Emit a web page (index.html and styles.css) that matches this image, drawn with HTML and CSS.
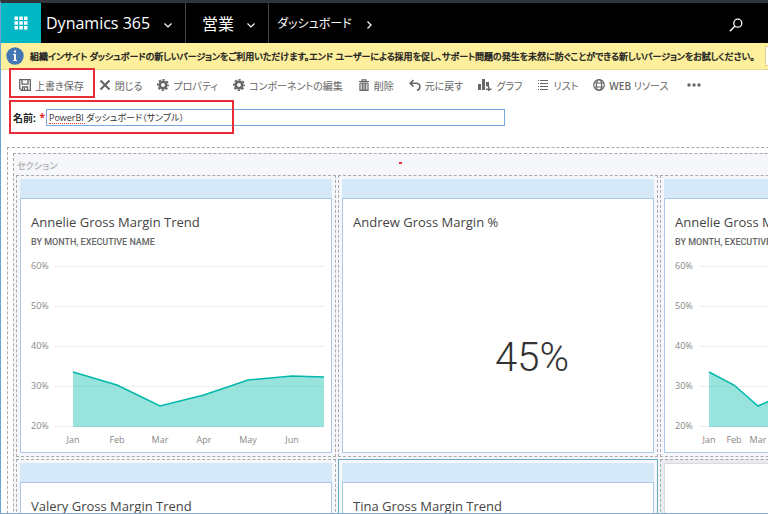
FILE: index.html
```html
<!DOCTYPE html>
<html lang="ja">
<head>
<meta charset="utf-8">
<title>Dynamics 365</title>
<link rel="stylesheet" href="styles.css">
</head>
<body>
<svg class="defs" aria-hidden="true">
  <symbol id="gear" viewBox="0 0 12 12">
    <circle cx="6" cy="6" r="3.300" fill="none" stroke="currentColor" stroke-width="2.600"/>
    <circle cx="6" cy="6" r="5.200" fill="none" stroke="currentColor" stroke-width="1.600" stroke-dasharray="2.3 1.784" stroke-dashoffset="1.15"/>
  </symbol>
  <symbol id="chevron" viewBox="0 0 10 10">
    <path d="M1.500 3.500 5 7l3.500-3.500" fill="none" stroke="currentColor" stroke-width="1.200"/>
  </symbol>
</svg>
<header class="topbar">
  <button class="waffle" aria-label="アプリ">
    <svg width="14" height="14" viewBox="0 0 14 14" fill="#fff"><path d="M.5.5h3.500v3.500H.5zM5.300.5h3.500v3.500H5.300zM10 .5h3.500v3.500H10zM.5 5.300h3.500v3.500H.5zM5.300 5.300h3.500v3.500H5.300zM10 5.300h3.500v3.500H10zM.5 10h3.500v3.500H.5zM5.300 10h3.500v3.500H5.300zM10 10h3.500v3.500H10z"/></svg>
  </button>
  <button class="nav brand">Dynamics 365<svg class="chev"><use href="#chevron"/></svg></button>
  <button class="nav area">営業<svg class="chev"><use href="#chevron"/></svg></button>
  <a class="nav crumb" href="#">ダッシュボード<svg class="chev right"><use href="#chevron"/></svg></a>
  <button class="search" aria-label="検索">
    <svg width="14" height="14" viewBox="0 0 14 14" fill="none" stroke="#fff" stroke-width="1.300"><circle cx="8.800" cy="5.200" r="4"/><path d="M6 8 .8 13.200"/></svg>
  </button>
</header>
<div class="notice">
  <svg class="info" width="18" height="18" viewBox="0 0 18 18"><circle cx="9" cy="9" r="8.700" fill="#4377b4"/><path d="M8 3.500h2v2H8zM7 7h3v6h1v1H7v-1h1V8H7z" fill="#fff"/></svg>
  <p>組織インサイト ダッシュボードの新しいバージョンをご利用いただけます。エンド ユーザーによる採用を促し、サポート問題の発生を未然に防ぐことができる新しいバージョンをお試しください。</p>
  <button aria-label="試す"></button>
</div>
<div class="toolbar">
  <button class="save"><svg viewBox="0 0 12 12" fill="none" stroke="currentColor" stroke-width="1.300"><path d="M.7.7h10.600v10.600H2.500L.7 9.500zM3 .7v4.500h6V.7M3.500 11V8h5v3M5.500 9v2"/></svg>上書き保存</button>
  <button><svg viewBox="0 0 12 12" stroke="currentColor" stroke-width="2.200"><path d="m1.500 1.500 9 9m0-9-9 9"/></svg>閉じる</button>
  <button><svg><use href="#gear"/></svg>プロパティ</button>
  <button><svg><use href="#gear"/></svg>コンポーネントの編集</button>
  <button><svg viewBox="0 0 12 12" fill="none" stroke="currentColor" stroke-width="1.200"><path d="M1 2.500h10M4 2.500V.8h4v1.700M2 4v7.400h8V4M4.300 4v7M6 4v7M7.700 4v7M2 4h8"/></svg>削除</button>
  <button><svg viewBox="0 0 12 12" fill="none" stroke="currentColor" stroke-width="1.600"><path d="M4.500 1 1.200 4.300l3.300 3.300M1.500 4.300H7c5 0 5 6 1 7"/></svg>元に戻す</button>
  <button><svg class="wide" viewBox="0 0 14 12" fill="currentColor"><path d="M0 5h3v6H0zM4 0h3v11H4zM8 3h3v4.500H8zM10 7.500h1.500v2h2V11h-2v1H10v-1H8V9.500h2z"/></svg>グラフ</button>
  <button><svg viewBox="0 0 12 12" fill="none" stroke="currentColor"><path d="M1 1.500h1m1 0h8M1 4.500h1m1 0h8M1 7.500h1m1 0h8M1 10.500h1m1 0h8"/></svg>リスト</button>
  <button><svg viewBox="0 0 12 12" fill="none" stroke="currentColor" stroke-width="1.200"><circle cx="6" cy="6" r="5.300"/><ellipse cx="6" cy="6" rx="2.600" ry="5.300"/><path d="M1.300 4h9.400M1.300 8h9.400"/></svg><span><b>WEB</b> リソース</span></button>
  <button class="overflow" aria-label="その他"><svg class="more" viewBox="0 0 14 12" fill="currentColor"><circle cx="2" cy="6" r="1.700"/><circle cx="7" cy="6" r="1.700"/><circle cx="12" cy="6" r="1.700"/></svg></button>
</div>
<div class="name-row">
  <label for="name">名前:<span>*</span></label>
  <div class="field"><input id="name" type="text" value="PowerBI ダッシュボード（サンプル）"></div>
</div>
<main class="canvas">
  <section class="section">
    <h2>セクション</h2>
    <div class="grid">
      <div class="cell"><div class="strip"></div>
        <article class="card">
          <h3>Annelie Gross Margin Trend</h3>
          <h4>BY MONTH, EXECUTIVE NAME</h4>
          <svg class="chart" width="294" height="188" viewBox="0 0 294 188">
            <path class="rule" d="M24 8.500h269M24 48.500h269M24 88.500h269M24 128.500h269M24 168.500h269"/>
            <path class="fill" d="M42 114 86 127 129 148 173 137 217 122 261 118 293 119V169H42z"/>
            <path class="line" d="M42 114 86 127 129 148 173 137 217 122 261 118 293 119"/>
            <g class="val"><text x="0" y="11">60%</text><text x="0" y="51">50%</text><text x="0" y="91">40%</text><text x="0" y="131">30%</text><text x="0" y="171">20%</text></g>
            <g class="month"><text x="42" y="185">Jan</text><text x="86" y="185">Feb</text><text x="129" y="185">Mar</text><text x="173" y="185">Apr</text><text x="217" y="185">May</text><text x="261" y="185">Jun</text></g>
          </svg>
        </article>
      </div>
      <div class="cell"><div class="strip"></div>
        <article class="card"><h3>Andrew Gross Margin %</h3><p class="kpi">45%</p></article>
      </div>
      <div class="cell"><div class="strip"></div>
        <article class="card">
          <h3>Annelie Gross Margin Trend</h3>
          <h4>BY MONTH, EXECUTIVE NAME</h4>
          <svg class="chart" width="294" height="188" viewBox="0 0 294 188">
            <path class="rule" d="M24 8.500h269M24 48.500h269M24 88.500h269M24 128.500h269M24 168.500h269"/>
            <path class="fill" d="M34 114 59 127 83 148 108 137 132 122 157 118 181 119V169H34z"/>
            <path class="line" d="M34 114 59 127 83 148 108 137 132 122 157 118 181 119"/>
            <g class="val"><text x="0" y="11">60%</text><text x="0" y="51">50%</text><text x="0" y="91">40%</text><text x="0" y="131">30%</text><text x="0" y="171">20%</text></g>
            <g class="month"><text x="34" y="185">Jan</text><text x="59" y="185">Feb</text><text x="83" y="185">Mar</text></g>
          </svg>
        </article>
      </div>
      <div class="cell"><div class="strip"></div><article class="card"><h3>Valery Gross Margin Trend</h3></article></div>
      <div class="cell selected"><div class="strip"></div><article class="card"><h3>Tina Gross Margin Trend</h3></article></div>
      <div class="cell empty"><article class="card"></article></div>
    </div>
  </section>
</main>
<div class="mark mark-save"></div>
<div class="mark mark-name"></div>
<div class="mark-dot"></div>
</body>
</html>
```
FILE: styles.css
```css
* { box-sizing: border-box; }
body {
  margin: 0;
  height: 100vh;
  overflow: hidden;
  position: relative;
  border-top: 3px solid #303539;
  border-left: 1px solid #6ba3d6;
  border-bottom: 1px solid #7fa8cc;
  background: #fff;
  color: #444;
  font-family: "Open Sans", "Noto Sans CJK JP", sans-serif;
  font-feature-settings: "palt";
}
button {
  border: 0;
  padding: 0;
  background: none;
  color: inherit;
  font: inherit;
  font-feature-settings: inherit;
}
h2, h3, h4, p { margin: 0; font-weight: 400; }
.defs { position: absolute; width: 0; height: 0; }

.topbar {
  display: flex;
  height: 40px;
  background: #000;
  color: #fff;
}
.waffle { width: 40px; background: #00b7c3; display: grid; place-items: center; }
.nav {
  display: flex;
  align-items: center;
  color: #fff;
  text-decoration: none;
  white-space: nowrap;
}
.brand { padding: 0 12px 0 5px; gap: 13px; font-size: 16px; border-right: 1px solid #444; }
.area { padding: 0 12px 0 16px; gap: 12px; font-size: 16px; border-right: 1px solid #444; }
.crumb { padding-left: 8px; gap: 12px; font-size: 12px; }
.chev { width: 10px; height: 10px; margin-top: 4px; }
.right { transform: rotate(-90deg); }
.search { margin-left: auto; margin-right: 25px; display: grid; place-items: center; padding-top: 4px; }

.notice {
  display: flex;
  align-items: center;
  height: 27px;
  padding-left: 5px;
  gap: 6px;
  background: #fdef9b;
  border-bottom: 1px solid #e8dc94;
  color: #222;
  font-size: 9px;
  white-space: nowrap;
  overflow: hidden;
}
.notice p { flex: 1 0 0; -webkit-text-stroke: 0.4px #222; }
.info { flex: none; }
.notice button { flex: none; width: 3px; height: 20px; background: #fff; border: 1px solid #ddd39a; border-right: 0; }

.toolbar {
  display: flex;
  align-items: center;
  height: 30px;
  padding-left: 18px;
  gap: 15px;
  color: #666;
  font-size: 10px;
  white-space: nowrap;
}
.toolbar button { display: flex; align-items: center; gap: 4px; }
.toolbar svg { width: 12px; height: 12px; flex: none; }
.toolbar .wide, .toolbar .more { width: 14px; }
.toolbar .overflow { padding-left: 4px; }
.toolbar b { font-weight: 600; }

.name-row { display: flex; align-items: center; height: 34px; padding-left: 12px; font-size: 10px; }
.name-row label { display: flex; width: 33px; color: #222; font-weight: 700; }
.name-row label span { margin-left: auto; padding-right: 1px; color: #d22; }
.field { position: relative; flex: 0 1 459px; display: flex; }
.field::after {
  content: "";
  position: absolute;
  left: 3px;
  bottom: 2px;
  width: 36px;
  border-bottom: 1px dotted #e33;
}
.field input {
  width: 100%;
  height: 17px;
  padding: 0 2px;
  border: 1px solid #7ba7e3;
  color: #333;
  font: inherit;
  font-size: 9px;
  font-feature-settings: inherit;
}

.canvas {
  width: max-content;
  min-width: 100%;
  margin: 13px 0 0 6px;
  padding: 5px;
  border: 1px dashed #aaa;
}
.section { border: 1px dashed #aaa; padding: 0 2px; background: #f5f7fa; }
.section h2 { height: 21px; padding: 4px 1px 0; color: #bbb; font-size: 9px; line-height: 16px; font-weight: 700; }
.grid {
  display: grid;
  grid-template-columns: repeat(3, minmax(320px, 1fr));
  grid-auto-rows: 282px;
  gap: 2px;
}
.cell { display: flex; flex-direction: column; padding: 3px; border: 1px dashed #aaa; }
.strip { height: 19px; background: #d6e9f8; }
.card { flex: 1; padding: 13px 6px 0 10px; background: #fff; border: 1px solid #abc8e8; }
.card h3 { font-size: 13px; line-height: 20px; white-space: nowrap; }
.card h4 { margin-top: 4px; color: #666; font: 500 9px/12px Roboto, sans-serif; }
.selected { border: 1px solid #68a9c2; }
.empty { background: #e9ebf0; }
.empty .card { border-color: #d8dadd; }
.chart { display: block; margin-top: 10px; font-size: 9px; }
.rule { stroke: #eee; fill: none; }
.fill { fill: #01b8aa; fill-opacity: .4; }
.line { stroke: #01b8aa; stroke-width: 1.5; fill: none; }
.val, .month { fill: #888; }
.month { text-anchor: middle; }
.kpi { margin-top: 102px; padding-left: 64px; text-align: center; color: #333; font: 300 40px/48px Roboto, sans-serif; }

.mark { position: absolute; border: 2px solid #e82c38; pointer-events: none; }
.mark-save { left: 8px; top: 65px; width: 86px; height: 30px; }
.mark-name { left: 8px; top: 97px; width: 225px; height: 34px; }
.mark-dot { position: absolute; left: 398px; top: 159px; width: 3px; height: 2px; background: #e82c38; }
```
